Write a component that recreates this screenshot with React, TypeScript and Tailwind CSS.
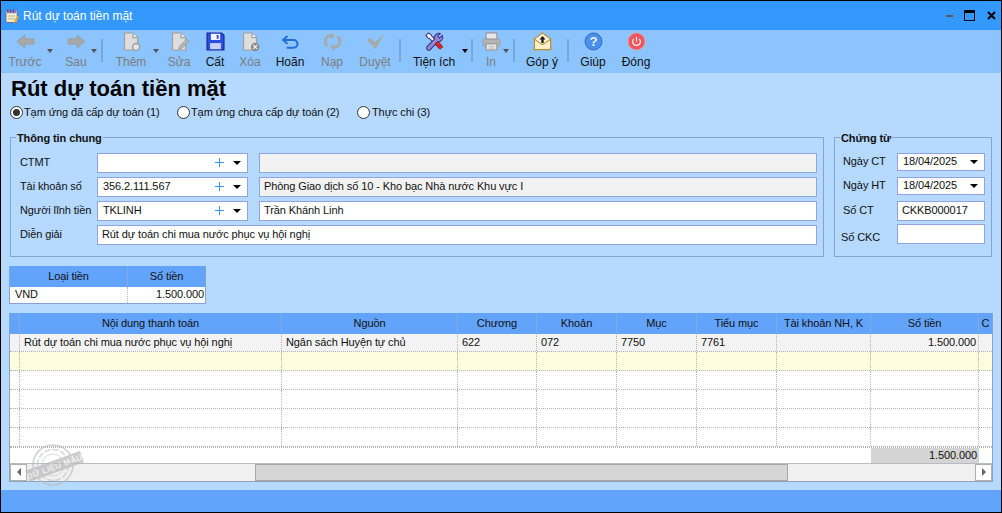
import React from "react";

const GRAY = "#a8a8a8";

function Ic({ children }: { children: React.ReactNode }) {
  return (
    <svg width={17} height={17} viewBox="1 1 22 22" className="block overflow-visible">
      {children}
    </svg>
  );
}

const Doc = () => (
  <>
    <path d="M3 1h11l6 6v16H3z" fill="#dedede" stroke="#a0a0a0" strokeWidth="1.6" />
    <path d="M14 1v6h6" fill="#f4f4f4" stroke="#a0a0a0" strokeWidth="1.6" />
  </>
);

const icons: Record<string, React.ReactNode> = {
  back: <Ic><path d="M1 12 11 3.500v5h12v7H11v5z" fill={GRAY} stroke="#949494" strokeWidth="0.8" /></Ic>,
  next: <Ic><path d="M23 12 13 3.500v5H1v7h12v5z" fill={GRAY} stroke="#949494" strokeWidth="0.8" /></Ic>,
  add: <Ic><Doc /><circle cx="18" cy="19" r="4.500" fill="#e6e6e6" stroke="#9c9c9c" strokeWidth="1.800" /></Ic>,
  edit: <Ic><Doc /><path d="M11 22l1-4 9-9 3 3-9 9z" fill="#b4b4b4" stroke="#8e8e8e" strokeWidth="0.8" /></Ic>,
  save: (
    <Ic>
      <path d="M1 1h19l3 3v19H1z" fill="#2d4fe0" stroke="#14249c" strokeWidth="1.400" />
      <rect x="6" y="2" width="12" height="8" fill="#f4f7ff" />
      <rect x="5" y="14" width="14" height="8" fill="#c5d2f5" />
      <rect x="13.500" y="3.500" width="2.500" height="5" fill="#2d4fe0" />
    </Ic>
  ),
  del: <Ic><Doc /><circle cx="18" cy="19" r="5.500" fill="#8a8a8a" /><path d="M15.500 16.500l5 5m0-5-5 5" stroke="#eee" strokeWidth="1.600" /></Ic>,
  undo: <Ic><path d="M8 5 2.500 10 8 15" fill="none" stroke="#1f6fd8" strokeWidth="2.600" /><path d="M3 10h13a5 5 0 0 1 0 10H7" fill="none" stroke="#1f6fd8" strokeWidth="2.600" /></Ic>,
  reload: (
    <Ic>
      <path d="M11 4.500H9.500a7.500 7.500 0 0 0-4 13.500" fill="none" stroke={GRAY} strokeWidth="3.600" />
      <path d="M13 19.500h1.500a7.500 7.500 0 0 0 4-13.500" fill="none" stroke={GRAY} strokeWidth="3.600" />
      <path d="M10 0l5 4.500-5 4.500zM14 24l-5-4.500 5-4.500z" fill={GRAY} />
    </Ic>
  ),
  check: <Ic><path d="M1 10l4-3 6 6L23 2 12 22z" fill={GRAY} /></Ic>,
  tools: (
    <Ic>
      <path d="M4 1 1 4l2.500 3.500 2 .5 12 12 3-3-12-12-1-2z" fill="#f4f4ff" stroke="#3b2f80" strokeWidth="1.300" />
      <path d="M22 4l-3.500 3.500-2.500-2.500L19.500 1.500a6 6 0 0 0-7.500 7.500L2 19a3 3 0 0 0 4 4L16 12.500a6 6 0 0 0 6-8.500z" fill="#8f86d8" stroke="#3b2f80" strokeWidth="1.300" />
      <path d="M13 15l6 7 4-3-6-7z" fill="#d9272e" stroke="#8f1414" strokeWidth="0.8" />
    </Ic>
  ),
  print: (
    <Ic>
      <rect x="5" y="1" width="14" height="8" fill="#e8e8e8" stroke="#969696" strokeWidth="1.500" />
      <rect x="1" y="9" width="22" height="9" rx="1.500" fill="#b4b4b4" stroke="#969696" />
      <rect x="5" y="15" width="14" height="8" fill="#eaeaea" stroke="#969696" strokeWidth="1.500" />
      <path d="M8 18h8M8 20.500h8" stroke="#aaa" />
    </Ic>
  ),
  mail: (
    <Ic>
      <rect x="1.500" y="9" width="21" height="13.500" fill="#fbf1cf" stroke="#c08e2c" strokeWidth="1.600" />
      <path d="M1.500 9 12 1l10.500 8L12 16z" fill="#fff7dc" stroke="#c08e2c" strokeWidth="1.400" />
      <path d="M12 5l4 4.500h-2.500V14h-3V9.500H8z" fill="#1c1c1c" />
    </Ic>
  ),
  help: (
    <Ic>
      <circle cx="12" cy="12" r="11" fill="#4a8fea" stroke="#2a66bf" strokeWidth="1.200" />
      <text x="12" y="18" textAnchor="middle" fontSize="17" fontWeight="700" fill="#e8f2ff" fontFamily="Liberation Sans, sans-serif">?</text>
    </Ic>
  ),
  power: (
    <Ic>
      <circle cx="12" cy="12" r="11" fill="#f0565c" stroke="#e8a0a4" />
      <path d="M8.500 8.500a5 5 0 1 0 7 0" fill="none" stroke="#fff" strokeWidth="1.500" />
      <path d="M12 6v6" stroke="#fff" strokeWidth="1.500" />
    </Ic>
  ),
};

function Caret({ dim, cls = "" }: { dim?: boolean; cls?: string }) {
  return <span className={`mt-[19px] h-0 w-0 shrink-0 border-x-[3.5px] border-t-[4px] border-x-transparent ${dim ? "border-t-[#555]" : "border-t-black"} ${cls}`} />;
}

function Tool({ cls, icon, label, off }: { cls: string; icon: string; label: string; off?: boolean }) {
  return (
    <div className={`flex h-full shrink-0 flex-col items-center pt-[3px] ${cls}`}>
      {icons[icon]}
      <span className={`mt-[5px] whitespace-nowrap text-[12px] leading-[14px] tracking-normal ${off ? "text-[#7d7d7d]" : "text-[#111]"}`}>{label}</span>
    </div>
  );
}

const Sep = ({ cls }: { cls: string }) => <div className={`mt-[9px] h-[23px] w-[2px] shrink-0 bg-[#75a8dc] ${cls}`} />;

function Combo({ v, plus = true, w = "w-[151px]", h = "h-[20px]" }: { v: string; plus?: boolean; w?: string; h?: string }) {
  return (
    <div className={`flex ${w} ${h} shrink-0 items-center border border-[#8fa4e0] bg-white pl-[5px] pr-[6px]`}>
      <span className="flex-1 leading-none">{v}</span>
      {plus && (
        <svg width="9" height="9" viewBox="0 0 9 9" className="mr-[9px]">
          <path d="M4.500 0v9M0 4.500h9" stroke="#3c97e8" />
        </svg>
      )}
      <span className="border-x-[4px] border-t-[4px] border-x-transparent border-t-black" />
    </div>
  );
}

function Box({ v, gray, w = "flex-1", h = "h-[20px]" }: { v?: string; gray?: boolean; w?: string; h?: string }) {
  return (
    <div className={`flex ${w} ${h} items-center border border-[#8fa4e0] pl-[4px] leading-none ${gray ? "bg-[#f2f2f2]" : "bg-white"}`}>
      {v}
    </div>
  );
}

function FormRow({ label, children, mt = "mt-[4px]" }: { label: string; children: React.ReactNode; mt?: string }) {
  return (
    <div className={`flex items-center ${mt}`}>
      <span className="w-[77px] shrink-0 whitespace-nowrap">{label}</span>
      {children}
    </div>
  );
}

const cols = [
  { w: 10, t: "" },
  { w: 262, t: "Nội dung thanh toán" },
  { w: 176, t: "Nguồn" },
  { w: 79, t: "Chương" },
  { w: 80, t: "Khoản" },
  { w: 80, t: "Mục" },
  { w: 80, t: "Tiểu mục" },
  { w: 94, t: "Tài khoản NH, K" },
  { w: 108, t: "Số tiền" },
  { w: 14, t: "C" },
];

const rowData = ["", "Rút dự toán chi mua nước phục vụ hội nghị", "Ngân sách Huyện tự chủ", "622", "072", "7750", "7761", "", "1.500.000", ""];

function Row({ data, cls, h }: { data?: string[]; cls: string; h: number }) {
  return (
    <div className={`flex shrink-0 border-b border-dotted border-[#b4b4b4] ${cls}`} style={{ height: h }}>
      {cols.map((c, i) => (
        <div
          key={i}
          className={`flex h-full shrink-0 items-center overflow-hidden whitespace-nowrap border-r border-dotted border-[#b4b4b4] px-[4px] ${i === 8 ? "justify-end pr-[2px]" : ""}`}
          style={{ width: c.w }}
        >
          {data?.[i]}
        </div>
      ))}
    </div>
  );
}

export default function App() {
  return (
    <div className="flex h-[513px] w-[1002px] flex-col overflow-hidden border border-black bg-[#b5d9ff] font-['Liberation_Sans',sans-serif] text-[11px] tracking-[-0.1px] text-[#111]">
      {/* title bar */}
      <div className="flex h-[29px] shrink-0 items-center bg-[#3399ff] pl-[4px] text-white">
        <svg width="15" height="18" viewBox="0 0 16 18" className="mr-[3px]">
          <rect x="1" y="3" width="12" height="13" rx="1" fill="#f6eecb" stroke="#6a5c9a" />
          <path d="M2 3h10v3H2z" fill="#8f7fc7" />
          <path d="M3 2v3M6 2v3M9 2v3" stroke="#4a3f7a" />
          <path d="M3 9h8M3 12h8" stroke="#b9b08a" />
          <path d="M13 9l2 1-4 6-2 1 .5-2z" fill="#e8a23a" />
        </svg>
        <span className="text-[12px] leading-none tracking-normal">Rút dự toán tiền mặt</span>
        <div className="ml-auto flex items-center pr-[5px]">
          <span className="mr-[11px] h-[2px] w-[7px] bg-[#56585c]" />
          <span className="mr-[12px] h-[11px] w-[11px] border border-black border-t-[3px]" />
          <svg width="9" height="9" viewBox="0 0 9 9"><path d="M1 1l7 7M8 1 1 8" stroke="#000" strokeWidth="2" /></svg>
        </div>
      </div>

      {/* toolbar */}
      <div className="flex h-[43px] shrink-0 items-start bg-[#8cc4ff]">
        <Tool cls="ml-[4px] w-[40px]" icon="back" label="Trước" off />
        <Caret dim cls="ml-[2px]" />
        <Tool cls="ml-[8px] w-[30px]" icon="next" label="Sau" off />
        <Caret dim />
        <Sep cls="ml-[4px]" />
        <Tool cls="ml-[8px] w-[40px]" icon="add" label="Thêm" off />
        <Caret dim cls="ml-[2px]" />
        <Tool cls="ml-[5px] w-[30px]" icon="edit" label="Sửa" off />
        <Tool cls="ml-[6px] w-[30px]" icon="save" label="Cất" />
        <Tool cls="ml-[5px] w-[30px]" icon="del" label="Xóa" off />
        <Tool cls="ml-[5px] w-[40px]" icon="undo" label="Hoãn" />
        <Tool cls="ml-[7px] w-[30px]" icon="reload" label="Nạp" off />
        <Tool cls="ml-[8px] w-[40px]" icon="check" label="Duyệt" off />
        <Sep cls="ml-[4px]" />
        <Tool cls="ml-[8px] w-[50px]" icon="tools" label="Tiện ích" />
        <Caret cls="ml-[3px]" />
        <Sep cls="ml-[3px]" />
        <Tool cls="ml-[6px] w-[24px]" icon="print" label="In" off />
        <Caret dim />
        <Sep cls="ml-[4px]" />
        <Tool cls="ml-[7px] w-[40px]" icon="mail" label="Góp ý" />
        <Sep cls="ml-[5px]" />
        <Tool cls="ml-[6px] w-[36px]" icon="help" label="Giúp" />
        <Tool cls="ml-[5px] w-[40px]" icon="power" label="Đóng" />
      </div>

      {/* body */}
      <div className="relative flex flex-1 flex-col px-[9px]">
        <h1 className="mt-[3px] pl-[1px] text-[22px] font-bold leading-[26px] tracking-normal text-black">Rút dự toán tiền mặt</h1>
        <div className="mt-[2px] flex items-center">
          <span className="flex h-[13px] w-[13px] items-center justify-center rounded-full border border-[#333] bg-white"><span className="h-[7px] w-[7px] rounded-full bg-[#333]" /></span>
          <span className="ml-[1px] w-[153px]">Tạm ứng đã cấp dự toán (1)</span>
          <span className="h-[13px] w-[13px] rounded-full border border-[#333] bg-white" />
          <span className="ml-[1px] w-[166px]">Tạm ứng chưa cấp dự toán (2)</span>
          <span className="h-[13px] w-[13px] rounded-full border border-[#333] bg-white" />
          <span className="ml-[2px]">Thực chi (3)</span>
        </div>

        <div className="mt-[10px] flex h-[126px] gap-[10px]">
          <fieldset className="h-full w-[814px] border border-[#86a3d8] pl-[9px] pr-[6px]">
            <legend className="-ml-[4px] px-[1px] font-bold leading-[14px]">Thông tin chung</legend>
            <FormRow label="CTMT" mt="mt-[8px]">
              <Combo v="" />
              <div className="w-[11px]" />
              <Box gray />
            </FormRow>
            <FormRow label="Tài khoản số">
              <Combo v="356.2.111.567" />
              <div className="w-[11px]" />
              <Box gray v="Phòng Giao dịch số 10 - Kho bạc Nhà nước Khu vực I" />
            </FormRow>
            <FormRow label="Người lĩnh tiền">
              <Combo v="TKLINH" />
              <div className="w-[11px]" />
              <Box v="Trần Khánh Linh" />
            </FormRow>
            <FormRow label="Diễn giải">
              <Box v="Rút dự toán chi mua nước phục vụ hội nghị" />
            </FormRow>
          </fieldset>
          <fieldset className="h-full w-[158px] border border-[#86a3d8] pl-[6px] pr-[6px]">
            <legend className="-ml-[1px] px-[1px] font-bold leading-[14px]">Chứng từ</legend>
            <div className="mt-[8px] flex items-center">
              <span className="ml-[2px] w-[54px]">Ngày CT</span>
              <Combo v="18/04/2025" plus={false} w="w-[88px]" h="h-[18px]" />
            </div>
            <div className="mt-[6px] flex items-center">
              <span className="ml-[2px] w-[54px]">Ngày HT</span>
              <Combo v="18/04/2025" plus={false} w="w-[88px]" h="h-[18px]" />
            </div>
            <div className="mt-[6px] flex items-center">
              <span className="ml-[2px] w-[54px]">Số CT</span>
              <Box v="CKKB000017" w="w-[88px]" />
            </div>
            <div className="mt-[2px] flex items-center">
              <span className="mt-[6px] w-[56px]">Số CKC</span>
              <Box w="w-[88px]" />
            </div>
          </fieldset>
        </div>

        {/* currency grid */}
        <div className="-ml-[1px] mt-[9px] w-[197px] border border-[#86a3d8] border-t-0 bg-white">
          <div className="flex h-[21px] bg-[#62a3fb]">
            <div className="flex w-[118px] items-center justify-center border-r border-[#86a9e0]">Loại tiền</div>
            <div className="flex flex-1 items-center justify-center">Số tiền</div>
          </div>
          <div className="flex h-[16px]">
            <div className="flex w-[118px] items-center border-r border-dotted border-[#b4b4b4] pl-[5px]">VND</div>
            <div className="flex flex-1 items-center justify-end pr-[1px]">1.500.000</div>
          </div>
        </div>

        {/* main grid */}
        <div className="-ml-[1px] mt-[9px] flex h-[169px] w-[984px] flex-col overflow-hidden border-x border-b border-[#8ea3bf] bg-white">
          <div className="flex h-[21px] shrink-0 bg-[#62a3fb]">
            {cols.map((c, i) => (
              <div
                key={i}
                className={`flex h-full shrink-0 justify-center overflow-hidden whitespace-nowrap border-r border-[#86a9e0] ${i === 7 ? "items-start pt-[2px]" : "items-center"}`}
                style={{ width: c.w }}
              >
                {c.t}
              </div>
            ))}
          </div>
          <Row data={rowData} cls="bg-[#f3f3f3]" h={18} />
          <Row cls="bg-[#fffde0]" h={19} />
          <Row cls="bg-white" h={19} />
          <Row cls="bg-white" h={19} />
          <Row cls="bg-white" h={19} />
          <Row cls="bg-white" h={19} />
          <div className="flex h-[16px] shrink-0 border-t border-dotted border-[#b4b4b4]">
            <div className="w-[861px] shrink-0" />
            <div className="flex w-[108px] shrink-0 items-center justify-end bg-[#d4d4d4] pr-[2px]">1.500.000</div>
          </div>
          <div className="flex h-[18px] shrink-0 items-stretch border-t border-[#b6bcc4] bg-[#f0f0f0]">
            <div className="flex w-[17px] items-center justify-center border border-[#b0b0b0] bg-white">
              <span className="border-y-[4px] border-r-[4px] border-y-transparent border-r-[#666]" />
            </div>
            <div className="w-[228px]" />
            <div className="w-[533px] border border-[#a8a8a8] bg-[#d6d6d6]" />
            <div className="flex-1" />
            <div className="flex w-[17px] items-center justify-center border border-[#b0b0b0] bg-white">
              <span className="border-y-[4px] border-l-[4px] border-y-transparent border-l-[#666]" />
            </div>
          </div>
        </div>

        <div className="flex-1" />
        <div className="-mx-[9px] h-[22px] shrink-0 bg-[#62a3fb]" />

        {/* stamp */}
        <svg width="56" height="46" viewBox="0 0 56 46" className="pointer-events-none absolute left-[24px] top-[369px] overflow-visible opacity-70">
          <circle cx="28" cy="23" r="20" fill="none" stroke="#bdbdbd" strokeWidth="1.500" />
          <circle cx="28" cy="23" r="15.500" fill="none" stroke="#c4c4c4" strokeWidth="1.500" strokeDasharray="6 2" />
          <circle cx="28" cy="23" r="11" fill="none" stroke="#cfcfcf" strokeWidth="1" />
          <g transform="rotate(-20 28 23)">
            <rect x="0" y="19" width="58" height="12" fill="#b8b8b8" />
            <text x="29" y="28" textAnchor="middle" fontSize="8" fontWeight="700" letterSpacing="0.5" fill="#eeeeee" fontFamily="Liberation Sans, sans-serif">DỮ LIỆU MẪU</text>
          </g>
        </svg>
      </div>
    </div>
  );
}
